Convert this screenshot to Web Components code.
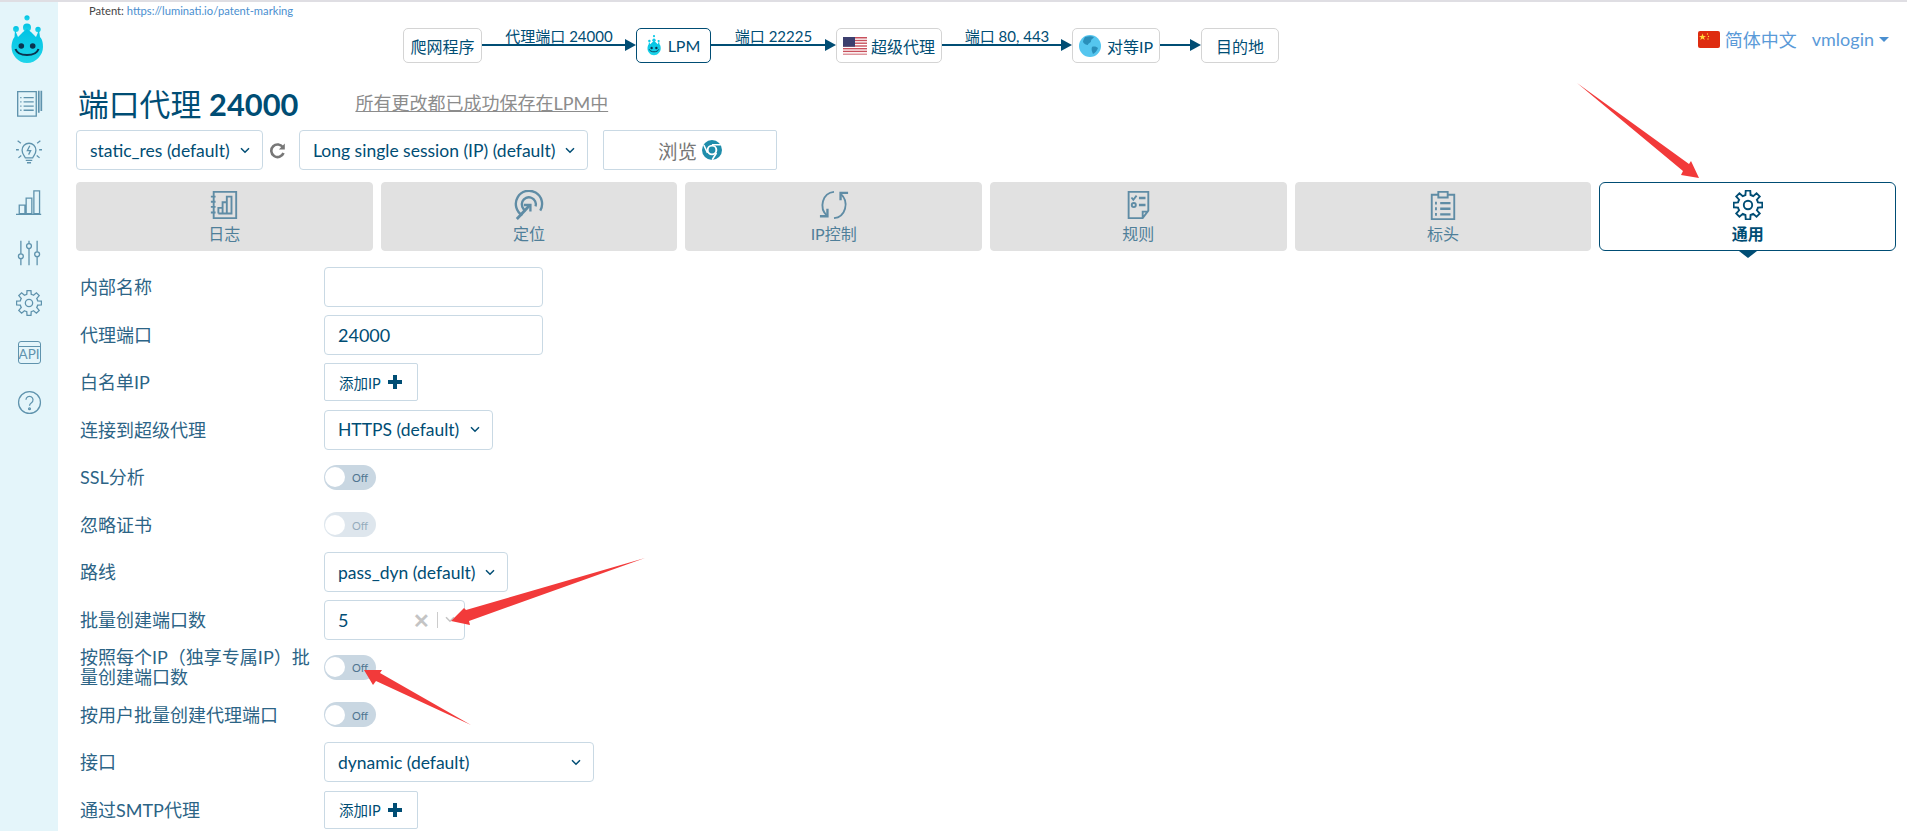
<!DOCTYPE html>
<html lang="zh-CN">
<head>
<meta charset="utf-8">
<title>LPM</title>
<style>
  html, body { margin: 0; height: 831px; overflow: hidden; background: #fff; }
  body { font-family: "Lato", "Noto Sans CJK SC", sans-serif; color: #004d74; position: relative; }
</style>
</head>
<body>
<lpm-app>
  <lpm-sidebar slot="side"></lpm-sidebar>

  <lpm-topbar slot="main">
    <lpm-flow></lpm-flow>
  </lpm-topbar>

  <lpm-title slot="main" port="24000">所有更改都已成功保存在LPM中</lpm-title>

  <lpm-toolbar slot="main">
    <lpm-select style="width:187px">static_res (default)</lpm-select>
    <lpm-refresh></lpm-refresh>
    <lpm-select style="width:289px">Long single session (IP) (default)</lpm-select>
    <lpm-browse></lpm-browse>
  </lpm-toolbar>

  <lpm-tabs slot="main">
    <lpm-tab icon="log">日志</lpm-tab>
    <lpm-tab icon="target">定位</lpm-tab>
    <lpm-tab icon="sync">IP控制</lpm-tab>
    <lpm-tab icon="rules">规则</lpm-tab>
    <lpm-tab icon="clip">标头</lpm-tab>
    <lpm-tab icon="gear" active>通用</lpm-tab>
  </lpm-tabs>

  <lpm-form slot="main">
    <lpm-row label="内部名称"><lpm-input style="width:219px"></lpm-input></lpm-row>
    <lpm-row label="代理端口"><lpm-input style="width:219px">24000</lpm-input></lpm-row>
    <lpm-row label="白名单IP"><lpm-add></lpm-add></lpm-row>
    <lpm-row label="连接到超级代理"><lpm-select style="width:169px">HTTPS (default)</lpm-select></lpm-row>
    <lpm-row label="SSL分析"><lpm-toggle></lpm-toggle></lpm-row>
    <lpm-row label="忽略证书"><lpm-toggle disabled></lpm-toggle></lpm-row>
    <lpm-row label="路线"><lpm-select style="width:184px">pass_dyn (default)</lpm-select></lpm-row>
    <lpm-row label="批量创建端口数"><lpm-multi style="width:141px">5</lpm-multi></lpm-row>
    <lpm-row label="按照每个IP（独享专属IP）批量创建端口数"><lpm-toggle></lpm-toggle></lpm-row>
    <lpm-row label="按用户批量创建代理端口"><lpm-toggle></lpm-toggle></lpm-row>
    <lpm-row label="接口"><lpm-select style="width:270px">dynamic (default)</lpm-select></lpm-row>
    <lpm-row label="通过SMTP代理"><lpm-add></lpm-add></lpm-row>
  </lpm-form>
</lpm-app>
<lpm-arrows></lpm-arrows>

<script>
// builds an n-tooth gear outline
function gearPath(cx, cy, rOut, rIn, n) {
  var d = "";
  for (var i = 0; i < n; i++) {
    var step = Math.PI * 2 / n;
    var a = i * step - Math.PI / 2;
    var pts = [[rIn, a - step * 0.32], [rOut, a - step * 0.2], [rOut, a + step * 0.2], [rIn, a + step * 0.32]];
    pts.forEach(function (p, j) {
      var x = (cx + p[0] * Math.cos(p[1])).toFixed(2);
      var y = (cy + p[0] * Math.sin(p[1])).toFixed(2);
      d += (i === 0 && j === 0 ? "M" : j === 0 ? "A" + rIn + " " + rIn + " 0 0 1 " : "L") + x + " " + y + " ";
    });
  }
  return d + "Z";
}

const ICONS = {
  log: `<path d="M5 2h24v28H5z"/><path d="M2 7h5M2 12.500h5M2 18h5M2 24h5"/><path d="M10 25V19h4.500v6M14.500 25V13H19v12M19 25V7h5v18zM10 25h14"/>`,
  target: `<path d="M9 27A14 14 0 1 1 28 22" stroke-width="2.500"/><path d="M12.500 22A7.500 7.500 0 1 1 23 17.500" stroke-width="2.500"/><path d="M3 31L16.500 16.500" stroke-width="3"/><path d="M10.500 16h7v7" stroke-width="2.500"/>`,
  sync: `<path d="M16 2C4 3-1 19 9 28M16 30C28 29 33 13 23 4"/><path d="M1 28h8v-8M31 3h-8v8" stroke-width="2.500"/>`,
  rules: `<path d="M27 2H6v28h15l6-8zM21 30v-7h6"/><path d="M9 8l2 2.500L14.500 6" stroke-width="2"/><circle cx="11.500" cy="16" r="2.200"/><path d="M17 8.500h7M17 16h7" stroke-width="2.500"/>`,
  clip: `<path d="M11 5H4v26h24V5h-7"/><path d="M11 2h10v6H11z"/><path d="M13 14h11M13 20h11M13 26h11" stroke-width="2.500"/><path d="M7.500 14h2M7.500 20h2M7.500 26h2" stroke-width="3"/>`,
  gear: `<path d="${gearPath(16, 16, 15.5, 11, 8)}"/><circle cx="16" cy="16" r="4.500"/>`,
  list: `<path d="M2 2h22v29H2z"/><path d="M27 1v26M30 1v24" stroke-width="2"/><path d="M9 9h12M9 14h12M9 19h12M9 24h12" stroke-width="1.500"/><path d="M5 9h1.500M5 14h1.500M5 19h1.500M5 24h1.500" stroke-width="1.500"/>`,
  bulb: `<path d="M11.500 22c-1-3-4-4.500-4-9.500a8.500 8.500 0 0 1 17 0c0 5-3 6.500-4 9.500z"/><path d="M12 25h8M13.500 28h5"/><path d="M17 7l-3 6h4l-2.500 5"/><path d="M2 1l4 3M30 1l-4 3M0 12h3.500M32 12h-3.500M3 22l3.500-3M29 22l-3.500-3"/>`,
  bars: `<path d="M0 30h31"/><path d="M4 18.500h7V29H4zM12.500 10h7v19h-7zM22 1h7v28h-7z"/>`,
  sliders: `<path d="M6 1v16M6 23v8M16 1v3.500M16 10.500V31M26 1v13.500M26 20.500V31"/><circle cx="6" cy="20" r="3"/><circle cx="16" cy="7.500" r="3"/><circle cx="26" cy="17.500" r="3"/>`,
  help: `<circle cx="16" cy="16" r="14"/><path d="M11.500 12.500a4.500 4.500 0 1 1 7 3.800c-1.500 1-2.500 2-2.500 4"/><circle cx="16" cy="24" r="1.200"/>`
};

function icon(name, size, color, sw) {
  return `<svg width="${size}" height="${size}" viewBox="0 0 32 32" fill="none" stroke="${color}" stroke-width="${sw}">${ICONS[name]}</svg>`;
}

const LOGO = `<defs><linearGradient id="lg" x1="0" y1="0" x2="0" y2="1"><stop offset="0" stop-color="#00c2e4"/><stop offset="1" stop-color="#1fd5ea"/></linearGradient></defs>
  <g fill="url(#lg)"><circle cx="16" cy="2.800" r="2.600"/><circle cx="5" cy="14" r="2.900"/><circle cx="16" cy="12.500" r="4"/><circle cx="27" cy="14.500" r="2.700"/>
  <path d="M4 15l3 7 5-5 4-3 4 3 5 5 3-7 1 7c3 3 3 8 3 10 0 8-7 16-16 16S.500 40 .500 32c0-3 1-8 3-10z"/></g>
  <circle cx="10.300" cy="31" r="2.800" fill="#0a3350"/><circle cx="21.700" cy="31" r="2.800" fill="#0a3350"/>
  <path d="M4.500 34c2.500 8 20.500 8 23 0" fill="none" stroke="#0a3350" stroke-width="2"/>`;

function chevron(color) {
  return `<svg width="10" height="7" viewBox="0 0 10 7" fill="none" stroke="${color || "#004d74"}" stroke-width="1.500"><path d="M1 1.200l4 4 4-4"/></svg>`;
}

// small helper, every element below is only a template and a shadow root
function define(tag, html, setup) {
  customElements.define(tag, class extends HTMLElement {
    constructor() {
      super();
      this.attachShadow({ mode: "open" });
    }
    connectedCallback() {
      this.shadowRoot.innerHTML = typeof html === "function" ? html(this) : html;
      if (setup) setup(this);
    }
  });
}

define("lpm-app", `
  <style>
    :host { display: flex; height: 829px; border-top: 2px solid #dfdee3; }
    .side { display: block; width: 58px; flex: none; background: #e4f5fa; }
    .main { flex: 1; min-width: 0; padding: 0 11px 0 18px; display: flex; flex-direction: column; }
    ::slotted(*) { flex: none; }
  </style>
  <div class="side"><slot name="side"></slot></div>
  <div class="main"><slot name="main"></slot></div>`);

define("lpm-sidebar", () => `
  <style>
    :host { display: flex; flex-direction: column; align-items: center; padding-top: 13px; }
    .logo { margin: 0 0 25px -4px; }
    .i { height: 50px; display: flex; justify-content: center; }
    .api { width: 23px; height: 23px; box-sizing: border-box; border: 1.500px solid #5f93ad; border-radius: 3px; margin-top: 1px;
      font: 13.500px/15px "Lato", sans-serif; color: #5f93ad; text-align: center; position: relative; padding-top: 5px; }
    .api::before { content: ""; position: absolute; left: 0; right: 0; top: 4px; border-top: 1.500px solid #5f93ad; }
  </style>
  <svg class="logo" width="32" height="50" viewBox="0 0 32 50" overflow="visible">${LOGO}</svg>
  <div class="i">${icon("list", 27, "#5f93ad", 1.6)}</div>
  <div class="i">${icon("bulb", 26, "#5f93ad", 1.6)}</div>
  <div class="i">${icon("bars", 26, "#5f93ad", 1.6)}</div>
  <div class="i">${icon("sliders", 26, "#5f93ad", 1.6)}</div>
  <div class="i">${icon("gear", 26, "#5f93ad", 1.6)}</div>
  <div class="i"><div class="api">API</div></div>
  <div class="i">${icon("help", 25, "#5f93ad", 1.6)}</div>`);

define("lpm-topbar", `
  <style>
    :host { display: block; height: 86px; }
    .patent { height: 26px; font-size: 11.200px; line-height: 18px; margin-left: 13px; color: #444; }
    .patent span { color: #4a8fd0; }
    .row { display: flex; align-items: flex-start; }
    ::slotted(lpm-flow) { margin-left: 327px; }
    .right { margin-left: auto; padding: 2px 7px 0 0; height: 18px; display: flex; align-items: center; color: #5a9ad8; font-size: 18px; }
    .right svg { margin-right: 5px; }
    .user { margin-left: 15px; }
    .caret { width: 0; height: 0; border: 5px solid transparent; border-top-color: #4a8fd0; border-bottom: 0; margin-left: 5px; }
  </style>
  <div class="patent">Patent: <span>https://luminati.io/patent-marking</span></div>
  <div class="row">
    <slot></slot>
    <div class="right">
      <svg width="22" height="17" viewBox="0 0 22 17"><rect width="22" height="17" rx="2" fill="#de2c10"/><path d="M4.500 2.500l.9 2.500 2.600 0-2.100 1.500.8 2.500-2.200-1.500-2.200 1.500.8-2.500L1 5l2.600 0z" fill="#ffd83a"/><circle cx="9.500" cy="3" r=".7" fill="#ffd83a"/><circle cx="10.500" cy="5.500" r=".7" fill="#ffd83a"/><circle cx="10" cy="8" r=".7" fill="#ffd83a"/></svg>
      <span>简体中文</span><span class="user">vmlogin</span><span class="caret"></span>
    </div>
  </div>`);

define("lpm-flow", `
  <style>
    :host { display: flex; align-items: flex-start; color: #004d74; }
    .n { height: 35px; box-sizing: border-box; border: 1px solid #d4d4d4; border-radius: 5px; background: #fff; display: flex; align-items: center; justify-content: center; gap: 4px; font-size: 16px; }
    .n.on { border-color: #004d74; }
    .c { height: 35px; display: flex; flex-direction: column; }
    .t { height: 11px; line-height: 16px; font-size: 15px; text-align: center; white-space: nowrap; }
    .a { height: 12px; display: flex; align-items: center; }
    .a i { flex: 1; height: 2px; background: #004d74; }
    .a b { width: 0; height: 0; border-left: 11px solid #004d74; border-top: 6px solid transparent; border-bottom: 6px solid transparent; }
  </style>
  <div class="n" style="width:79px">爬网程序</div>
  <div class="c" style="width:154px"><div class="t">代理端口 24000</div><div class="a"><i></i><b></b></div></div>
  <div class="n on" style="width:75px;gap:7px"><svg width="14" height="21" viewBox="0 0 32 50">${LOGO.replace(/lg/g, "lg2")}</svg>LPM</div>
  <div class="c" style="width:125px"><div class="t">端口 22225</div><div class="a"><i></i><b></b></div></div>
  <div class="n" style="width:106px">
    <svg width="24" height="18" viewBox="0 0 24 18"><rect width="24" height="18" fill="#fff"/><g fill="#c8505c"><rect y="0" width="24" height="1.500"/><rect y="2.800" width="24" height="1.400"/><rect y="5.500" width="24" height="1.400"/><rect y="8.300" width="24" height="1.400"/><rect y="11" width="24" height="1.400"/><rect y="13.700" width="24" height="1.400"/><rect y="16.500" width="24" height="1.500" opacity=".6"/></g><rect width="12" height="9.700" fill="#3c3f6e"/></svg>超级代理</div>
  <div class="c" style="width:130px"><div class="t">端口 80, 443</div><div class="a"><i></i><b></b></div></div>
  <div class="n" style="width:88px;gap:6px">
    <svg width="22" height="22" viewBox="0 0 22 22"><circle cx="11" cy="11" r="11" fill="#55c6ef"/><path d="M6 2c3-1 7-1 9 0-1 2-3 2-3 4s-3 2-3 4c-2 0-4-1-5-3 0-2 1-3 2-5zM13 12c2-1 5 0 6 1-1 3-3 5-5 6-1-2-2-5-1-7z" fill="#2a8fba"/></svg>
    对等IP</div>
  <div class="c" style="width:41px"><div class="t"></div><div class="a"><i></i><b></b></div></div>
  <div class="n" style="width:78px">目的地</div>`);

define("lpm-title", (el) => `
  <style>
    :host { display: flex; align-items: center; height: 42px; box-sizing: border-box; padding: 0 0 8px 2px; }
    h1 { margin: 0; font-size: 30.800px; font-weight: 400; color: #004d74; white-space: nowrap; line-height: 36px; }
    h1 b { font-weight: 700; }
    .s { margin-left: 57px; font-size: 18px; color: #8c8c8c; text-decoration: underline; margin-top: -6px; }
  </style>
  <h1>端口代理 <b>${el.getAttribute("port")}</b></h1>
  <span class="s"><slot></slot></span>`);

define("lpm-toolbar", `
  <style>:host { display: flex; align-items: center; height: 40px; }
  ::slotted(lpm-browse) { margin-left: 15px; }</style>
  <slot></slot>`);

define("lpm-select", () => `
  <style>
    :host { display: flex; box-sizing: border-box; height: 40px; align-items: center; justify-content: space-between; padding: 0 12px 0 13px;
      border: 1px solid #c9d9e4; border-radius: 4px; background: #fff; font-size: 17.500px; color: #004d74; white-space: nowrap; }
  </style>
  <span><slot></slot></span>${chevron()}`);

define("lpm-refresh", `
  <style>:host { display: flex; box-sizing: border-box; width: 36px; padding-right: 8px; justify-content: center; }</style>
  <svg width="17" height="17" viewBox="0 0 17 17" fill="none"><path d="M14 5.500A6.300 6.300 0 1 0 14.500 11" stroke="#777" stroke-width="2.600"/><path d="M15.800 1.500v6h-6z" fill="#777"/></svg>`);

define("lpm-browse", `
  <style>
    :host { display: flex; box-sizing: border-box; width: 174px; height: 40px; align-items: center; justify-content: center; gap: 5px;
      border: 1px solid #c9d9e4; border-radius: 2px; font-size: 19.500px; color: #777; }
  </style>
  浏览
  <svg width="20" height="20" viewBox="0 0 20 20"><circle cx="10" cy="10" r="10" fill="#1f8dab"/><path d="M10 4.800h8.800M14.500 13l-4.300 6.800M5.500 13L1.800 5" stroke="#fff" stroke-width="1.600" fill="none"/><circle cx="10" cy="10" r="5.300" fill="#fff"/><circle cx="10" cy="10" r="3.400" fill="#1f8dab"/></svg>`);

define("lpm-tabs", `
  <style>:host { display: flex; gap: 8px; margin-top: 12px; }
  ::slotted(lpm-tab) { flex: 1; }</style>
  <slot></slot>`);

define("lpm-tab", (el) => {
  const on = el.hasAttribute("active");
  return `
  <style>
    :host { display: flex; flex-direction: column; align-items: center; box-sizing: border-box; height: 69px; padding-top: 7px; position: relative;
      border-radius: ${on ? 6 : 4}px; background: ${on ? "#fff" : "#e1e1e1"}; border: 1px solid ${on ? "#004d74" : "#e1e1e1"};
      font-size: 16px; color: ${on ? "#004d74" : "#4f7f99"}; font-weight: ${on ? 700 : 400}; }
    svg { display: block; }
    .l { margin-top: 2px; line-height: 24px; }
    .tip { position: absolute; left: 50%; bottom: -8px; margin-left: -9px; width: 0; height: 0; border: 9px solid transparent; border-top: 7px solid #004d74; border-bottom: 0; }
  </style>
  ${icon(el.getAttribute("icon"), 30, on ? "#004d74" : "#5f8ca5", 2)}
  <span class="l"><slot></slot></span>
  ${on ? '<span class="tip"></span>' : ""}`;
});

define("lpm-form", `
  <style>:host { display: block; margin-top: 16px; padding-left: 4px; }</style>
  <slot></slot>`);

define("lpm-row", (el) => `
  <style>
    :host { display: flex; height: 47.500px; align-items: flex-start; }
    .l { width: 244px; flex: none; box-sizing: border-box; padding-right: 8px; height: 40px; display: flex; align-items: center;
      font-size: 18px; line-height: 20px; color: #2c6486; }
    .c { height: 40px; display: flex; align-items: center; }
  </style>
  <div class="l"><span>${el.getAttribute("label")}</span></div>
  <div class="c"><slot></slot></div>`);

define("lpm-input", `
  <style>
    :host { display: flex; box-sizing: border-box; height: 40px; align-items: center; padding-left: 13px;
      border: 1px solid #c9d9e4; border-radius: 4px; font-size: 18px; color: #004d74; }
  </style>
  <slot></slot>`);

define("lpm-multi", () => `
  <style>
    :host { display: flex; box-sizing: border-box; height: 40px; align-items: center; padding-left: 13px; position: relative;
      border: 1px solid #c9d9e4; border-radius: 4px; font-size: 18px; color: #004d74; }
    .x { margin-left: auto; font-size: 20px; font-weight: 700; color: #c4c4c4; line-height: 20px; }
    .sep { width: 1px; height: 16px; background: #ccc; margin: 0 7px 0 7px; }
    .ch { margin-right: 9px; display: flex; }
  </style>
  <slot></slot><span class="x">✕</span><span class="sep"></span><span class="ch">${chevron("#c4c4c4")}</span>`);

define("lpm-add", `
  <style>
    :host { display: flex; box-sizing: border-box; width: 94px; height: 38px; align-items: center; gap: 7px; padding-left: 14px;
      border: 1px solid #c9d9e4; border-radius: 2px; font-size: 14.500px; color: #004d74; }
    svg { flex: none; }
  </style>
  添加IP
  <svg width="14" height="14" viewBox="0 0 14 14"><path d="M5 0h4v5h5v4H9v5H5V9H0V5h5z" fill="#004d74" stroke-linejoin="round"/></svg>`);

define("lpm-toggle", (el) => `
  <style>
    :host { display: flex; box-sizing: border-box; width: 52px; height: 25px; border-radius: 13px; background: #c9d7e2; align-items: center; position: relative;
      font-size: 11px; color: #4f7590; opacity: ${el.hasAttribute("disabled") ? 0.6 : 1}; }
    .k { width: 20px; height: 20px; border-radius: 50%; background: #fff; margin-left: 1px; }
    .o { margin-left: 7px; margin-top: 1px; }
  </style>
  <span class="k"></span><span class="o">Off</span>`);

define("lpm-arrows", `
  <style>:host { position: absolute; left: 0; top: 0; width: 1907px; height: 831px; pointer-events: none; }</style>
  <svg width="1907" height="831" fill="#f23a3a">
    <path d="M1577 83L1689 164 1691 161 1699 178 1681 175 1683 171z"/>
    <path d="M645 558L466 610 464 608 451 621 470 625 469 621z"/>
    <path d="M471 725L380 673 382 670 364 670 373 685 376 681z"/>
  </svg>`);
</script>
</body>
</html>
